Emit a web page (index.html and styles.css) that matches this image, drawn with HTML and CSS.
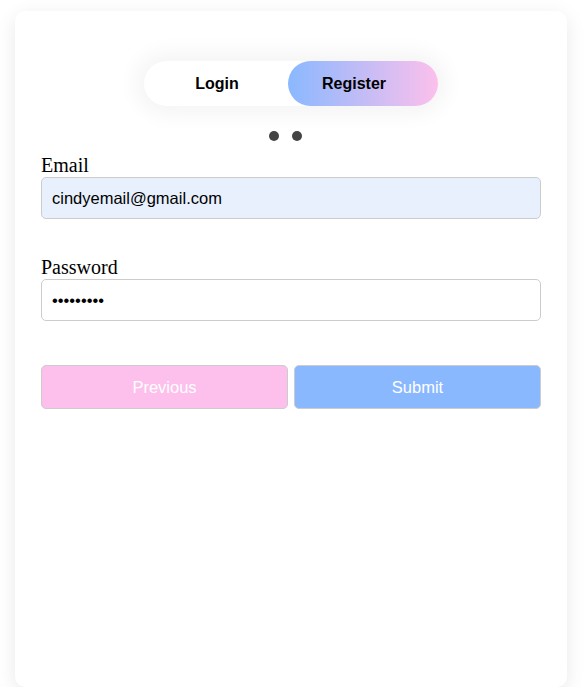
FILE: index.html
```html
<!DOCTYPE html>
<html>
<head>
<meta charset="utf-8">
<link rel="stylesheet" href="styles.css">
</head>
<body>
<div class="card">
  <div class="toggle">
    <span class="tab tab-login">Login</span>
    <span class="tab tab-register">Register</span>
  </div>
  <div class="dots"><span class="dot"></span><span class="dot"></span></div>
  <form class="form">
    <label class="label">Email</label>
    <input class="input input-email" type="text" value="cindyemail@gmail.com">
    <label class="label label-gap">Password</label>
    <input class="input" type="password" value="123456789">
    <div class="actions">
      <button type="button" class="btn btn-prev">Previous</button>
      <button type="button" class="btn btn-submit">Submit</button>
    </div>
  </form>
</div>
</body>
</html>
```

FILE: styles.css
```css
html, body {
  margin: 0;
  padding: 0;
  background: #ffffff;
}
body {
  padding-top: 11px;
  padding-left: 15px;
}
.card {
  width: 552px;
  height: 676px;
  box-sizing: border-box;
  background: #fff;
  border-radius: 10px;
  box-shadow: 0 5px 20px rgba(0, 0, 0, 0.09);
  padding: 50px 26px 0 26px;
}
.toggle {
  width: 294px;
  height: 45px;
  margin: 0 auto;
  display: flex;
  border-radius: 30px;
  box-shadow: 0 0 20px 9px rgba(0, 0, 0, 0.045);
  background: #fff;
  font-family: "Liberation Sans", Arial, sans-serif;
  font-weight: bold;
  font-size: 16px;
  color: #000;
}
.tab {
  display: flex;
  align-items: center;
  justify-content: center;
  height: 100%;
}
.tab-login {
  width: 144px;
  padding-left: 2px;
  box-sizing: border-box;
}
.tab-register {
  width: 150px;
  padding-right: 18px;
  box-sizing: border-box;
  border-radius: 30px;
  background: linear-gradient(to right, #8ab8ff, #fcc0ec);
}
.dots {
  display: flex;
  justify-content: center;
  gap: 13px;
  margin-top: 25px;
  padding-right: 12px;
  height: 10px;
}
.dot {
  width: 10px;
  height: 10px;
  border-radius: 50%;
  background: #444;
}
.form {
  display: flex;
  flex-direction: column;
  margin-top: 13px;
}
.label {
  display: block;
  font-family: "Liberation Serif", "Times New Roman", serif;
  font-size: 20px;
  line-height: 23px;
  color: #000;
}
.label-gap {
  margin-top: 37px;
}
.input {
  width: 500px;
  height: 42px;
  box-sizing: border-box;
  border: 1px solid #ccc;
  border-radius: 5px;
  padding: 0 10px;
  font-family: "Liberation Sans", Arial, sans-serif;
  font-size: 16.5px;
  color: #000;
  background: #fff;
  outline: none;
  margin: 0;
}
.input-email {
  background: #e8f0fe;
}
.actions {
  display: flex;
  gap: 6px;
  margin-top: 44px;
}
.btn {
  flex: 1;
  height: 44px;
  box-sizing: border-box;
  border: 1px solid #ccc;
  border-radius: 5px;
  color: #fff;
  font-family: "Liberation Sans", Arial, sans-serif;
  font-size: 16.5px;
  padding: 0;
}
.btn-prev {
  background: #fdc0ec;
}
.btn-submit {
  background: #8ab8ff;
}
```
